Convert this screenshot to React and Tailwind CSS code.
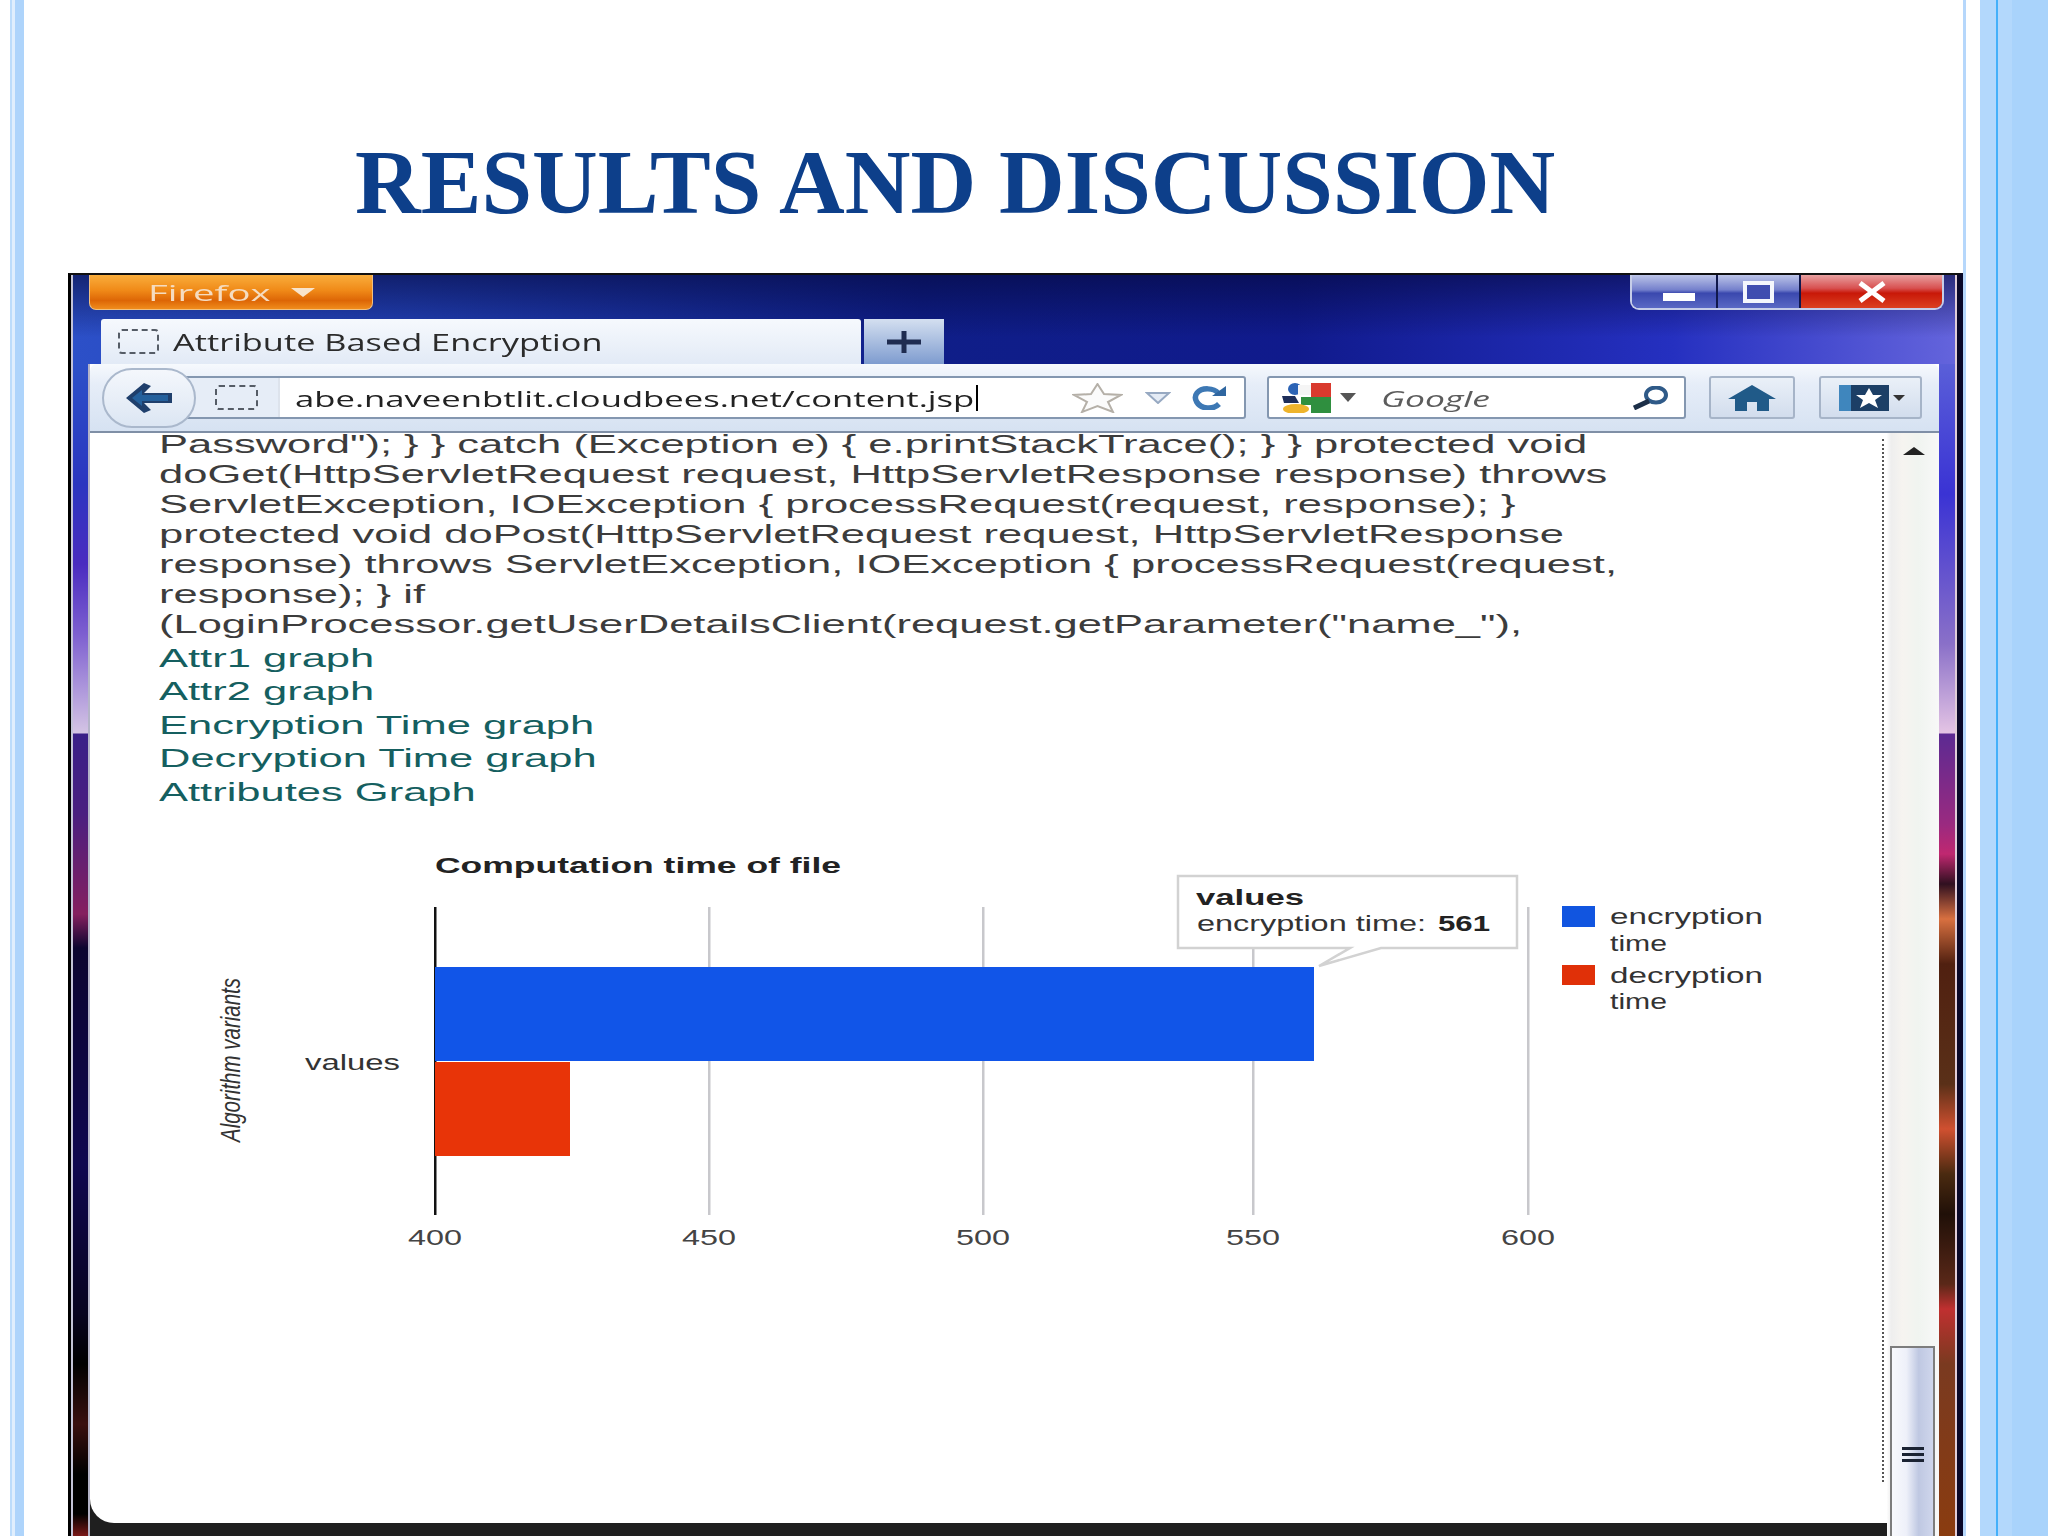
import React from "react";

const bodyLines = [
  'Password"); } } catch (Exception e) { e.printStackTrace(); } } protected void',
  "doGet(HttpServletRequest request, HttpServletResponse response) throws",
  "ServletException, IOException { processRequest(request, response); }",
  "protected void doPost(HttpServletRequest request, HttpServletResponse",
  "response) throws ServletException, IOException { processRequest(request,",
  "response); } if",
  '(LoginProcessor.getUserDetailsClient(request.getParameter("name_"),',
];
const links = ["Attr1 graph", "Attr2 graph", "Encryption Time graph", "Decryption Time graph", "Attributes Graph"];

function Chart() {
  const t = { fontFamily: "'Liberation Sans', Arial, sans-serif", lengthAdjust: "spacingAndGlyphs" };
  const grid = [709, 983, 1253, 1528];
  const ticks = [[435, "400"], [709, "450"], [983, "500"], [1253, "550"], [1528, "600"]];
  return (
    <svg className="block" width="1790" height="520" viewBox="90 808 1790 520">
      {grid.map((x) => (
        <rect key={x} x={x - 1} y="907" width="2.5" height="308" fill="#c8c8cc" />
      ))}
      <rect x="434" y="907" width="2.5" height="308" fill="#111" />
      <rect x="435" y="967" width="879" height="94" fill="#1155e8" />
      <rect x="435" y="1062" width="135" height="94" fill="#e83408" />
      <text x="435" y="873" fontSize="22" fontWeight="700" fill="#222" textLength="406" {...t}>Computation time of file</text>
      <text x="305" y="1070" fontSize="22" fill="#333" textLength="95" {...t}>values</text>
      <text
        transform="translate(240 1142) rotate(-90)"
        fontSize="28"
        fontStyle="italic"
        fill="#333"
        textLength="164"
        {...t}
      >
        Algorithm variants
      </text>
      {ticks.map(([x, s]) => (
        <text key={s} x={x - 27} y="1245" fontSize="22" fill="#444" textLength="54" {...t}>{s}</text>
      ))}
      <path d="M1178 876H1517V948H1381L1319 966L1350 948H1178Z" fill="#fff" stroke="#d2d2d2" strokeWidth="2.5" />
      <text x="1196" y="905" fontSize="22" fontWeight="700" fill="#222" textLength="108" {...t}>values</text>
      <text x="1197" y="931" fontSize="22" fill="#333" textLength="229" {...t}>encryption time:</text>
      <text x="1438" y="931" fontSize="22" fontWeight="700" fill="#222" textLength="52" {...t}>561</text>
      <rect x="1562" y="906" width="33" height="21" fill="#1155e0" />
      <rect x="1562" y="965" width="33" height="20" fill="#e03008" />
      <text x="1610" y="924" fontSize="22" fill="#333" textLength="153" {...t}>encryption</text>
      <text x="1610" y="951" fontSize="22" fill="#333" textLength="57" {...t}>time</text>
      <text x="1610" y="983" fontSize="22" fill="#333" textLength="153" {...t}>decryption</text>
      <text x="1610" y="1009" fontSize="22" fill="#333" textLength="57" {...t}>time</text>
    </svg>
  );
}

function Dashed({ className }) {
  return <div className={"shrink-0 rounded-[4px] border-2 border-dashed border-[#555c66] " + className} />;
}

export default function App() {
  return (
    <div className="flex h-[1536px] w-[2048px] overflow-hidden bg-white font-['Liberation_Sans',Arial,sans-serif]">
      {/* left slide stripes */}
      <div className="ml-[10px] h-full w-[2px] shrink-0 bg-[#bcdcfb]" />
      <div className="h-full w-[3px] shrink-0 bg-[#e0eefd]" />
      <div className="h-full w-[9px] shrink-0 bg-[#aed4fb]" />

      {/* slide body */}
      <div className="flex h-full w-[1942px] shrink-0 flex-col border-r-[3px] border-[#b6d7fb] pl-[44px]">
        <div className="flex h-[273px] shrink-0 items-start pl-[287px] pt-[127px]">
          <h1 className="whitespace-nowrap font-['Liberation_Serif',serif] text-[91px] font-bold leading-[112px] text-[#0d3f8a]">
            RESULTS AND DISCUSSION
          </h1>
        </div>

        {/* browser window */}
        <div className="flex min-h-0 flex-1 flex-col overflow-hidden border-l-[3px] border-r-[6px] border-t-2 border-l-black border-r-[#0a0828] border-t-[#111] blur-[0.6px]">
          <div className="flex min-h-0 flex-1 flex-col border-l-2 border-r-2 border-l-[#c4c4d8] border-r-[#e0cdd8]">
            {/* title bar + tabs */}
            <div className="h-[89px] shrink-0 bg-[linear-gradient(180deg,#04083c99_0%,#0000_70%),linear-gradient(90deg,#2c50c8_0%,#2342b8_18%,#0f1e88_45%,#101a8c_65%,#2530c0_85%,#6464dc_100%)]">
              <div className="flex h-[44px] items-start justify-between pl-[16px] pr-[11px]">
                <div className="flex h-[35px] w-[284px] items-center rounded-b-[7px] border border-t-0 border-[#f0c080] bg-[linear-gradient(180deg,#f9ad3c_0%,#f08a18_45%,#dd6606_75%,#f08c1c_100%)] pl-[58px]">
                  <span className="origin-left scale-x-[1.74] whitespace-nowrap font-['Open_Sans',sans-serif] text-[22px] leading-none text-[#f5dcc0]">Firefox</span>
                  <svg className="ml-[72px]" width="26" height="9" viewBox="0 0 26 9"><path d="M1 0H25L13 9Z" fill="#f8e4cc" /></svg>
                </div>
                <div className="flex h-[35px] w-[314px] overflow-hidden rounded-b-[9px] border-2 border-t-0 border-[#c6cde8]">
                  <div className="flex h-full w-[86px] items-end justify-center border-r-2 border-[#10184c] bg-[linear-gradient(180deg,#bcc4e8_0%,#7480cc_45%,#3a48ae_55%,#5a68c4_100%)] pb-[7px] pl-[10px]">
                    <div className="h-[8px] w-[32px] bg-white" />
                  </div>
                  <div className="flex h-full w-[83px] items-center justify-center border-r-2 border-[#10184c] bg-[linear-gradient(180deg,#bcc4e8_0%,#7480cc_45%,#3a48ae_55%,#5a68c4_100%)]">
                    <div className="flex h-[22px] w-[31px] items-center justify-center border-[4px] border-[#f4f6fc] bg-[#404eb0]" />
                  </div>
                  <div className="flex h-full flex-1 items-center justify-center bg-[linear-gradient(180deg,#e8a0a0_0%,#d85050_40%,#c81808_55%,#dc4020_100%)]">
                    <svg width="32" height="22" viewBox="0 0 32 22"><path d="M4 2L28 20M28 2L4 20" stroke="#fff" strokeWidth="5" /></svg>
                  </div>
                </div>
              </div>
              <div className="flex h-[45px] items-end pl-[28px]">
                <div className="flex h-[45px] w-[760px] items-center rounded-t-[3px] bg-[linear-gradient(180deg,#f6f9fd_0%,#e2eaf6_100%)] pl-[17px]">
                  <Dashed className="h-[25px] w-[41px]" />
                  <span className="ml-[14px] mt-[1px] origin-left scale-x-[1.43] whitespace-nowrap font-['Open_Sans',sans-serif] text-[24px] leading-none text-[#2b2b2b]">Attribute Based Encryption</span>
                </div>
                <div className="ml-[3px] flex h-[45px] w-[80px] items-center justify-center bg-[linear-gradient(180deg,#d4dff0_0%,#7e9ccf_100%)]">
                  <svg width="34" height="22" viewBox="0 0 34 22"><path d="M0 11H34M17 0V22" stroke="#1f2c50" strokeWidth="5" /></svg>
                </div>
              </div>
            </div>

            <div className="flex min-h-0 flex-1">
              {/* left frame */}
              <div className="h-full w-[17px] shrink-0 border-r-2 border-[#b4b4c8] bg-[linear-gradient(180deg,#2c50c8_0px,#2b36c0_120px,#4a2cc0_200px,#7d5fd0_270px,#d4c4e4_369px,#3a2088_370px,#4a1f80_450px,#85205f_550px,#0c0530_584px,#100850_800px,#080420_950px,#000_1000px,#3a1010_1060px,#000_1110px,#000_1150px,#7a1818_1172px)]" />

              <div className="flex min-w-0 flex-1 flex-col">
                {/* toolbar */}
                <div className="flex h-[69px] shrink-0 items-center rounded-t-[7px] border-b-2 border-[#7f8fa6] bg-[linear-gradient(180deg,#f6f9fd_0%,#e6edf8_30%,#d6e2f2_100%)] pl-[12px] pr-[17px]">
                  <div className="relative z-10 flex h-[60px] w-[94px] shrink-0 items-center justify-center rounded-full border-2 border-[#aab8cc] bg-[linear-gradient(180deg,#f4f7fc_0%,#dce6f3_100%)]">
                    <svg width="46" height="30" viewBox="0 0 46 30">
                      <path d="M0 15L18 0L25 3L18 10H46V20H18L25 27L18 30Z" fill="#1f3f6c" />
                      <path d="M6 15L16 7V12H42V18H16V23Z" fill="#24609c" />
                    </svg>
                  </div>
                  <div className="-ml-[30px] flex h-[43px] w-[1080px] shrink-0 items-center rounded-[3px] border-2 border-[#8497b0] bg-white">
                    <div className="flex h-full w-[112px] shrink-0 items-center border-r-2 border-[#dde3ec] bg-[#e6edf7] pl-[47px]">
                      <Dashed className="h-[25px] w-[43px]" />
                    </div>
                    <div className="flex min-w-0 flex-1 items-center pl-[15px]">
                      <span className="origin-left scale-x-[1.575] whitespace-nowrap font-['Open_Sans',sans-serif] text-[22px] leading-none text-[#222]">abe.naveenbtlit.cloudbees.net/content.jsp</span>
                      <span className="ml-[250px] h-[26px] w-[2px] bg-black" />
                    </div>
                    <svg className="shrink-0" width="51" height="30" viewBox="0 0 51 30"><path d="M25.500 1L32 11L49 12L36 19L41 29L25.500 23L10 29L15 19L2 12L19 11Z" fill="#fbfbfb" stroke="#b5b0a8" strokeWidth="2" /></svg>
                    <svg className="ml-[22px] shrink-0" width="26" height="12" viewBox="0 0 26 12"><path d="M2 1H24L13 11Z" fill="#e4ebf5" stroke="#97a9c2" strokeWidth="2" /></svg>
                    <svg className="ml-[20px] mr-[18px] shrink-0" width="35" height="24" viewBox="0 0 35 24">
                      <path d="M27 7C23 2 11 1 6 7C2 12 6 21 16 22C21 22.500 25 21 28 18" fill="none" stroke="#3d78b4" strokeWidth="5.500" />
                      <path d="M21 10H35V0Z" fill="#2f66a0" />
                    </svg>
                  </div>
                  <div className="ml-[21px] flex h-[43px] w-[419px] shrink-0 items-center rounded-[3px] border-2 border-[#8497b0] bg-white pl-[12px] pr-[15px]">
                    <svg className="shrink-0" width="50" height="30" viewBox="0 0 50 30">
                      <rect x="30" y="0" width="20" height="14" fill="#d93a2e" />
                      <path d="M20 14H50V30H30V22H20Z" fill="#2f8f3f" />
                      <ellipse cx="14" cy="6" rx="7" ry="6" fill="#2b63b5" />
                      <path d="M1 13L14 13L18 20L3 20Z" fill="#1d2e5a" />
                      <ellipse cx="15" cy="26" rx="13" ry="5" fill="#eeb42c" />
                      <rect x="17" y="2" width="13" height="10" fill="#f5f5f5" />
                    </svg>
                    <svg className="ml-[8px] shrink-0" width="18" height="9" viewBox="0 0 18 9"><path d="M1 0H17L9 9Z" fill="#555" /></svg>
                    <span className="ml-[24px] origin-left scale-x-[1.61] whitespace-nowrap font-['Open_Sans',sans-serif] text-[22px] italic leading-none text-[#5c5c5c]">Google</span>
                    <svg className="ml-auto shrink-0" width="38" height="24" viewBox="0 0 38 24">
                      <ellipse cx="25" cy="9" rx="10" ry="7.500" fill="none" stroke="#2f5a88" strokeWidth="4" />
                      <path d="M18 15L3 22" stroke="#1c2f48" strokeWidth="5" />
                    </svg>
                  </div>
                  <div className="ml-[23px] flex h-[43px] w-[86px] shrink-0 items-center justify-center rounded-[3px] border-2 border-[#a6b4c8] bg-[linear-gradient(180deg,#eaf0f8_0%,#d2dded_100%)]">
                    <svg width="48" height="26" viewBox="0 0 48 26">
                      <path d="M24 0L48 14H41V26H29V17H19V26H7V14H0Z" fill="#205a88" />
                    </svg>
                  </div>
                  <div className="ml-[24px] flex h-[43px] w-[103px] shrink-0 items-center rounded-[3px] border-2 border-[#a6b4c8] bg-[linear-gradient(180deg,#eaf0f8_0%,#d2dded_100%)] pl-[18px]">
                    <svg width="50" height="26" viewBox="0 0 50 26">
                      <rect width="50" height="26" fill="#1c3f66" />
                      <rect width="12" height="26" fill="#3f86bd" />
                      <path d="M30 3L34 10H43L36 15L39 23L30 18L21 23L24 15L17 10H26Z" fill="#fff" />
                    </svg>
                    <svg className="ml-[4px]" width="12" height="6" viewBox="0 0 12 6"><path d="M0 0H12L6 6Z" fill="#333" /></svg>
                  </div>
                </div>

                {/* page + scrollbar */}
                <div className="flex min-h-0 flex-1">
                  <div className="flex min-w-0 flex-1 flex-col bg-[#1f1f1f]">
                    <div className="flex min-h-0 flex-1 overflow-hidden rounded-bl-[24px] bg-white pr-[3px]">
                      <div className="min-w-0 flex-1">
                        <div className="pl-[69px]">
                          {bodyLines.map((l, i) => (
                            <div key={l} className={(i === 0 ? "h-[26px] leading-[22px]" : "h-[30px] leading-[30px]") + " origin-left scale-x-[1.74] whitespace-nowrap text-[25px] text-[#3c3c3c]"}>{l}</div>
                          ))}
                          <div className="h-[1.5px]" />
                          {links.map((l) => (
                            <div key={l} className="h-[33.5px] origin-left scale-x-[1.74] whitespace-nowrap text-[25px] leading-[34px] text-[#155f60]">{l}</div>
                          ))}
                        </div>
                        <Chart />
                      </div>
                      <div className="mt-[6px] h-[1043px] w-0 shrink-0 border-l-2 border-dotted border-[#555]" />
                    </div>
                    <div className="h-[13px] shrink-0" />
                  </div>
                  <div className="flex h-full w-[52px] shrink-0 flex-col bg-[linear-gradient(90deg,#fdfdfd_0%,#eeeeee_8%,#f6f4f0_30%,#f0f4f0_60%,#f8f8f8_100%)] pl-[3px] pr-[4px]">
                    <div className="flex h-[914px] justify-center pt-[14px]">
                      <svg className="ml-[3px]" width="22" height="8" viewBox="0 0 22 8"><path d="M0 8L11 0L22 8Z" fill="#222" /></svg>
                    </div>
                    <div className="mt-auto flex h-[190px] shrink-0 flex-col items-center border-2 border-b-0 border-[#7d7d7d] bg-[linear-gradient(90deg,#f8f9fd_0%,#eef0f9_35%,#bfc8e2_65%,#cfd6ec_100%)] pt-[99px]">
                      <div className="flex flex-col gap-[3px]">
                        <div className="h-[3px] w-[22px] bg-[#1b2333]" />
                        <div className="h-[3px] w-[22px] bg-[#1b2333]" />
                        <div className="h-[3px] w-[22px] bg-[#1b2333]" />
                      </div>
                    </div>
                  </div>
                </div>
              </div>

              {/* right frame */}
              <div className="h-full w-[16px] shrink-0 bg-[linear-gradient(180deg,#5a5fd8_0px,#3a33d4_130px,#8a70c8_280px,#e4c4e4_369px,#5c2a92_370px,#9a2a80_460px,#c02870_490px,#301020_520px,#d87040_555px,#502010_600px,#5a3018_720px,#d05030_765px,#4a2a10_810px,#201008_850px,#5a2818_920px,#c03030_945px,#7a3a20_1000px,#8a3c10_1172px)]" />
            </div>
          </div>
        </div>
      </div>

      {/* right slide stripes */}
      <div className="h-full w-[14px] shrink-0 bg-white" />
      <div className="h-full w-[16px] shrink-0 bg-[#b3d8fc]" />
      <div className="h-full w-[2px] shrink-0 bg-[#44b0fa]" />
      <div className="h-full w-[14px] shrink-0 bg-[#b3d8fc]" />
      <div className="h-full flex-1 bg-[#a9d3fb]" />
    </div>
  );
}
